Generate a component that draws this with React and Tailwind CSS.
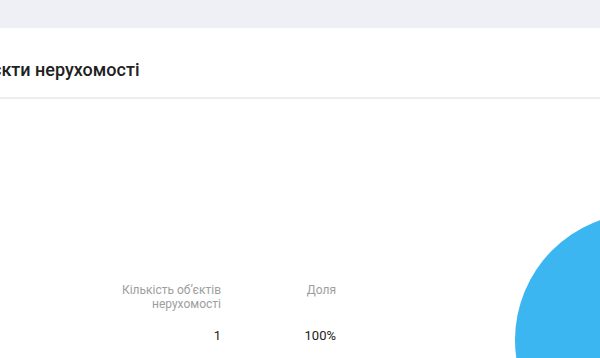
export default function App() {
  return (
    <div className="relative w-[600px] h-[358px] overflow-hidden bg-white font-['Roboto',sans-serif]">
      {/* top page band */}
      <div className="h-[28px] bg-[#eff0f5]" />

      {/* card header */}
      <div className="h-[71px] pt-[30px] border-b-2 border-[#ececec]">
        <h2 className="-ml-[34px] text-[18px] leading-[24px] font-medium text-[#212121] whitespace-nowrap">
          Обʼєкти нерухомості
        </h2>
      </div>

      {/* card body */}
      <div className="flex h-[259px]">
        <div className="pt-[184px] shrink-0">
          <div className="grid grid-cols-[221px_115px] text-right">
            <div className="text-[12px] leading-[14px] text-[#9e9e9e]">
              Кількість обʼєктів
              <br />
              нерухомості
            </div>
            <div className="text-[12px] leading-[14px] text-[#9e9e9e]">Доля</div>
            <div className="mt-[17px] text-[13px] leading-[16px] text-[#212121]">1</div>
            <div className="mt-[17px] text-[13px] leading-[16px] text-[#212121]">100%</div>
          </div>
        </div>
        <svg className="flex-1 h-full" viewBox="0 0 264 259">
          <circle cx="306" cy="241" r="127" fill="#3bb6f0" />
        </svg>
      </div>
    </div>
  );
}
